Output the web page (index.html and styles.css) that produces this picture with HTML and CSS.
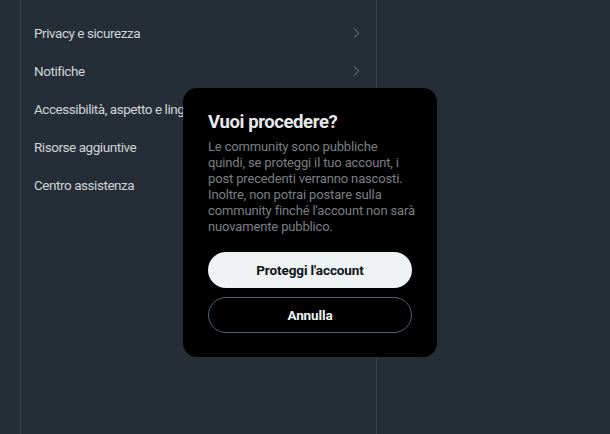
FILE: index.html
```html
<!DOCTYPE html>
<html lang="it">
<head>
<meta charset="utf-8">
<title>Impostazioni</title>
<link rel="stylesheet" href="styles.css">
</head>
<body>
<div class="page">
  <div class="gutter"></div>
  <nav class="settings">
    <ul class="menu">
      <li class="item"><span>Privacy e sicurezza</span><svg class="chev" viewBox="0 0 24 24"><path d="M9 5l7 7-7 7"/></svg></li>
      <li class="item"><span>Notifiche</span><svg class="chev" viewBox="0 0 24 24"><path d="M9 5l7 7-7 7"/></svg></li>
      <li class="item"><span>Accessibilità, aspetto e lingue</span><svg class="chev" viewBox="0 0 24 24"><path d="M9 5l7 7-7 7"/></svg></li>
      <li class="item"><span>Risorse aggiuntive</span><svg class="chev" viewBox="0 0 24 24"><path d="M9 5l7 7-7 7"/></svg></li>
      <li class="item"><span>Centro assistenza</span><svg class="chev" viewBox="0 0 24 24"><path d="M9 5l7 7-7 7"/></svg></li>
    </ul>
  </nav>
  <div class="detail"></div>
</div>
<div class="dialog" role="dialog">
  <h1 class="title">Vuoi procedere?</h1>
  <p class="text">Le community sono pubbliche<br>quindi, se proteggi il tuo account, i<br>post precedenti verranno nascosti.<br>Inoltre, non potrai postare sulla<br>community finché l'account non sarà<br>nuovamente pubblico.</p>
  <div class="actions">
    <button class="btn primary">Proteggi l'account</button>
    <button class="btn secondary">Annulla</button>
  </div>
</div>
</body>
</html>
```

FILE: styles.css
```css
* { box-sizing: border-box; }
html, body {
  margin: 0;
  height: 100%;
  background: #252e36;
  font-family: "Roboto", "Liberation Sans", sans-serif;
  overflow: hidden;
}
.page {
  display: flex;
  height: 434px;
}
.gutter { width: 20px; flex: none; }
.settings {
  width: 357px;
  flex: none;
  border-left: 1px solid #39434b;
  border-right: 1px solid #39434b;
}
.detail { flex: 1; }
.menu {
  list-style: none;
  margin: 0;
  padding: 14px 0 0;
}
.item {
  height: 38px;
  display: flex;
  align-items: center;
  justify-content: space-between;
  padding: 0 12px 0 13px;
  color: #d0d4d7;
  font-size: 13.5px;
  font-weight: 400;
  letter-spacing: -0.45px;
  white-space: nowrap;
}
.chev {
  width: 16px;
  height: 16px;
  fill: none;
  stroke: #5d666c;
  stroke-width: 1.6;
}
.dialog {
  position: absolute;
  left: 183px;
  top: 88px;
  width: 254px;
  height: 269px;
  background: #000;
  border-radius: 14px;
  padding: 20px 25px 24px;
  color: #e7e9ea;
}
.title {
  margin: 0;
  font-size: 18.5px;
  line-height: 28px;
  font-weight: 700;
  letter-spacing: -0.4px;
  color: #e7e9ea;
}
.text {
  margin: 3px 0 0;
  font-size: 13px;
  line-height: 16px;
  letter-spacing: -0.15px;
  white-space: nowrap;
  color: #7a7f84;
}
.actions {
  display: flex;
  flex-direction: column;
  gap: 9px;
  margin-top: 17px;
}
.btn {
  height: 36px;
  border-radius: 18px;
  font-family: inherit;
  font-size: 13.5px;
  font-weight: 700;
  letter-spacing: -0.1px;
  cursor: pointer;
}
.primary {
  background: #eff3f4;
  color: #0f1419;
  border: none;
}
.secondary {
  background: #000;
  color: #eff3f4;
  border: 1px solid #536471;
}
```
